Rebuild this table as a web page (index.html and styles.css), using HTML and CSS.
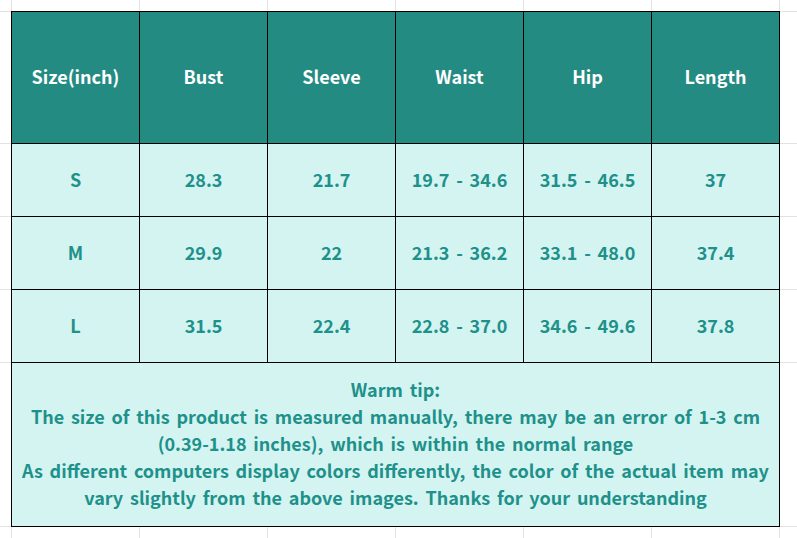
FILE: index.html
```html
<!DOCTYPE html>
<html lang="en">
<head>
<meta charset="utf-8">
<title>Size chart</title>
<link rel="stylesheet" href="styles.css">
</head>
<body>
<div class="sheet">
  <div class="chart">
    <div class="cell head">Size(inch)</div>
    <div class="cell head">Bust</div>
    <div class="cell head">Sleeve</div>
    <div class="cell head">Waist</div>
    <div class="cell head">Hip</div>
    <div class="cell head">Length</div>

    <div class="cell">S</div>
    <div class="cell">28.3</div>
    <div class="cell">21.7</div>
    <div class="cell">19.7 - 34.6</div>
    <div class="cell">31.5 - 46.5</div>
    <div class="cell">37</div>

    <div class="cell">M</div>
    <div class="cell">29.9</div>
    <div class="cell">22</div>
    <div class="cell">21.3 - 36.2</div>
    <div class="cell">33.1 - 48.0</div>
    <div class="cell">37.4</div>

    <div class="cell">L</div>
    <div class="cell">31.5</div>
    <div class="cell">22.4</div>
    <div class="cell">22.8 - 37.0</div>
    <div class="cell">34.6 - 49.6</div>
    <div class="cell">37.8</div>

    <div class="cell tip">
      <p>Warm tip:<br>The size of this product is measured manually, there may be an error of 1-3 cm<br>(0.39-1.18 inches), which is within the normal range<br>As different computers display colors differently, the color of the actual item may<br>vary slightly from the above images. Thanks for your understanding</p>
    </div>
  </div>
</div>
</body>
</html>
```
FILE: styles.css
```css
html, body {
  margin: 0;
  padding: 0;
}

body {
  width: 797px;
  height: 538px;
  overflow: hidden;
  background-color: #ffffff;
  background-image:
    linear-gradient(to bottom, transparent 11px, #e2e2e2 11px, #e2e2e2 12px, transparent 12px),
    linear-gradient(to bottom, transparent 143px, #e2e2e2 143px, #e2e2e2 144px, transparent 144px),
    linear-gradient(to bottom, transparent 216px, #e2e2e2 216px, #e2e2e2 217px, transparent 217px),
    linear-gradient(to bottom, transparent 289px, #e2e2e2 289px, #e2e2e2 290px, transparent 290px),
    linear-gradient(to bottom, transparent 362px, #e2e2e2 362px, #e2e2e2 363px, transparent 363px),
    linear-gradient(to bottom, transparent 526px, #e2e2e2 526px, #e2e2e2 527px, transparent 527px),
    repeating-linear-gradient(to right, #e2e2e2 0, #e2e2e2 1px, transparent 1px, transparent 128px);
  background-position: 0 0, 0 0, 0 0, 0 0, 0 0, 0 0, 11px 0;
  font-family: "Noto Sans CJK KR", "Noto Sans", sans-serif;
}

.sheet {
  padding: 11px 0 0 11px;
}

.chart {
  display: grid;
  grid-template-columns: repeat(6, 127px);
  grid-template-rows: 131px 72px 72px 72px 163px;
  gap: 1px;
  padding: 1px;
  width: max-content;
  background: #000000;
}

.cell {
  display: flex;
  align-items: center;
  justify-content: center;
  padding-bottom: 2px;
  box-sizing: border-box;
  background: #d3f4f1;
  color: #20908a;
  font-size: 18px;
  font-weight: 700;
  line-height: 27px;
  word-spacing: 2.7px;
}

.head {
  background: #248b83;
  color: #ffffff;
}

.tip {
  grid-column: 1 / -1;
  text-align: center;
}

.tip p {
  margin: 0;
}
```
